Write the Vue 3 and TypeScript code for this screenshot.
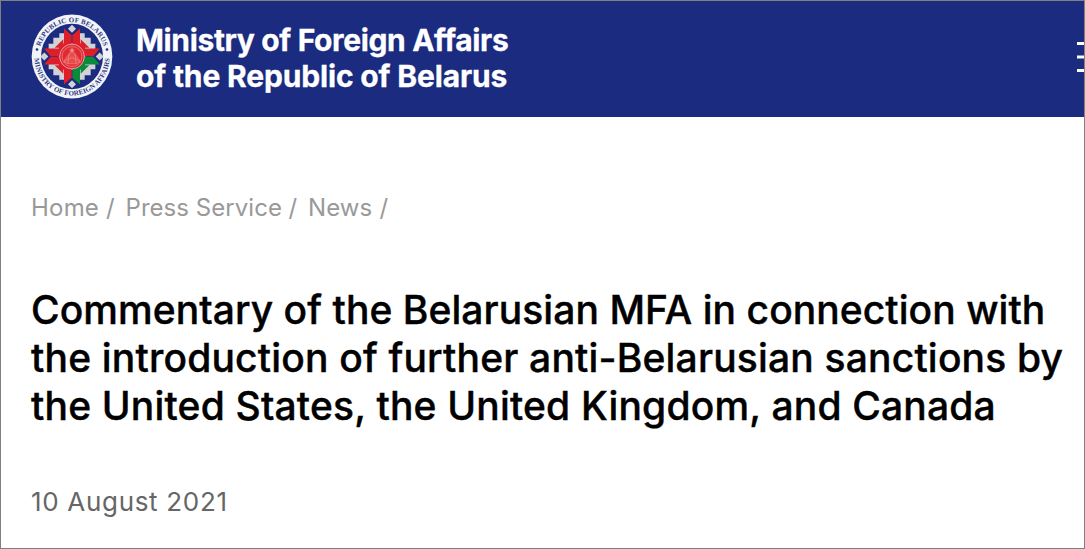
<template>
    <div class="page">
        <header class="header">
            <a class="brand" href="#">
                <svg class="emblem" viewBox="-126 -130.5 252 261" aria-hidden="true">
                    <defs>
                        <path id="arc-top" d="M-99 0A99 103 0 0 1 99 0" />
                        <path id="arc-bottom" d="M-113 0A113 117 0 0 0 113 0" />
                    </defs>
                    <ellipse rx="121" ry="126" fill="#f3f4fa" />
                    <ellipse rx="93" ry="98" fill="#1b2c80" />
                    <text class="emblem-text" text-anchor="middle">
                        <textPath href="#arc-top" startOffset="50%" textLength="256">REPUBLIC OF BELARUS</textPath>
                    </text>
                    <text class="emblem-text" text-anchor="middle">
                        <textPath href="#arc-bottom" startOffset="50%" textLength="350">MINISTRY OF FOREIGN AFFAIRS</textPath>
                    </text>
                    <circle cx="-105" cy="-21" r="4" fill="#1b2c80" />
                    <circle cx="105" cy="-21" r="4" fill="#1b2c80" />
                    <rect x="-40" y="-40" width="80" height="80" fill="#d3d2d6" />
                    <g v-for="angle in [0, 90, 180, 270]" :key="angle" :transform="`rotate(${angle})`">
                        <path fill="#d3d2d6" d="M20-20V-70H38V-56H56V-38H70V-20Z" />
                        <path fill="#d3d2d6" d="M0-95L12-83L0-71L-12-83Z" />
                    </g>
                    <g v-for="arm in arms" :key="arm.angle" :transform="`rotate(${arm.angle})`">
                        <path :fill="arm.left" d="M-1-20V-64L-24-84V-20Z" />
                        <path :fill="arm.left" d="M-26-20V-52L-39-39V-20Z" />
                        <path :fill="arm.right" d="M1-20V-64L24-84V-20Z" />
                        <path :fill="arm.right" d="M26-20V-52L39-39V-20Z" />
                    </g>
                    <circle r="37" fill="#df2a34" stroke="#efb2ae" stroke-width="2.5" />
                    <circle r="30" fill="none" stroke="#ee6c6c" stroke-width="3" />
                    <path d="M-25 15L-9-8L0-18L9-8L25 15L12 22H-12ZM-9-8L-12 22M9-8L12 22M-25 15L0 3L25 15" fill="#e94a4c" stroke="#f08a86" stroke-width="2" />
                    <path d="M0-28L3-21H10L4-17L6-10L0-14L-6-10L-4-17L-10-21H-3Z" fill="#f08a86" />
                </svg>
                <span class="brand-name">
                    <span class="brand-line first">Ministry of Foreign Affairs</span>
                    <span class="brand-line">of the Republic of Belarus</span>
                </span>
            </a>
            <button class="menu" type="button" aria-label="Menu">
                <span></span>
                <span class="middle"></span>
                <span></span>
            </button>
        </header>

        <main class="content">
            <nav class="breadcrumbs">
                <template v-for="crumb in crumbs" :key="crumb.label">
                    <a href="#" :class="crumb.name">{{ crumb.label }}</a>
                    <span class="slash">/</span>
                </template>
            </nav>
            <h1 class="title">
                <span class="title-line first">Commentary of the Belarusian MFA in connection with</span>
                <span class="title-line">the introduction of further anti-Belarusian sanctions by</span>
                <span class="title-line">the United States, the United Kingdom, and Canada</span>
            </h1>
            <time class="date" datetime="2021-08-10">10 August 2021</time>
        </main>
    </div>
</template>

<script setup lang="ts">
interface Crumb {
    name: string
    label: string
}

interface Arm {
    angle: number
    left: string
    right: string
}

const crumbs: Crumb[] = [
    { name: 'home', label: 'Home' },
    { name: 'press', label: 'Press Service' },
    { name: 'news', label: 'News' }
]

const red = '#dc1f2b'
const green = '#0b8a3c'

const arms: Arm[] = [
    { angle: 0, left: red, right: red },
    { angle: 90, left: red, right: green },
    { angle: 180, left: green, right: red },
    { angle: 270, left: red, right: red }
]
</script>

<style>
body {
    margin: 0;
    background: #fff;
}
</style>

<style scoped>
.page {
    box-sizing: border-box;
    height: 549px;
    border: 1px solid #808080;
    overflow: hidden;
    background: #fff;
    font-family: Inter, "Liberation Sans", sans-serif;
    white-space: nowrap;
}

.header {
    display: flex;
    justify-content: space-between;
    height: 116px;
    background: #1a2b80;
}

.brand {
    display: flex;
    align-items: flex-start;
    padding-left: 29px;
    color: #fff;
    text-decoration: none;
}

.emblem {
    width: 84px;
    height: 87px;
    margin-top: 12px;
}

.emblem-text {
    font-family: "Liberation Serif", serif;
    font-size: 21px;
    font-weight: 700;
    fill: #2c3a80;
}

.brand-name {
    margin: 21px 0 0 22px;
    font-size: 30px;
    font-weight: 700;
    line-height: 36px;
    -webkit-text-stroke: 0.3px #fff;
}

.brand-line {
    display: block;
    letter-spacing: -0.16px;
}

.brand-line.first {
    letter-spacing: -0.36px;
}

.menu {
    display: flex;
    flex-direction: column;
    gap: 11px;
    width: 7px;
    margin: 41px 0 0;
    padding: 0;
    border: 0;
    background: none;
}

.menu span {
    width: 7px;
    height: 3px;
    background: #fff;
}

.menu .middle {
    box-sizing: border-box;
    height: 4px;
    margin: -1px 0;
    border: solid #8c95bf;
    border-width: 1px 0;
}

.content {
    padding: 76px 0 0 30px;
}

.breadcrumbs {
    display: flex;
    height: 30px;
    color: #999;
    font-size: 24px;
    font-weight: 400;
    line-height: 30px;
}

.breadcrumbs a {
    color: inherit;
    text-decoration: none;
}

.home {
    width: 75px;
    letter-spacing: 0.2px;
}

.press {
    width: 163px;
    letter-spacing: 0.05px;
}

.news {
    width: 71.5px;
    letter-spacing: 0.1px;
}

.slash {
    width: 19.5px;
}

.title {
    margin: 63px 0 0;
    color: #000;
    font-size: 39px;
    font-weight: 500;
    line-height: 48px;
    -webkit-text-stroke: 0.4px #000;
}

.title-line {
    display: block;
    letter-spacing: 0.18px;
}

.title-line.first {
    letter-spacing: 0.06px;
}

.date {
    display: block;
    margin-top: 56px;
    color: #666;
    font-size: 26px;
    font-weight: 400;
    line-height: 32px;
    letter-spacing: 0.68px;
}
</style>
